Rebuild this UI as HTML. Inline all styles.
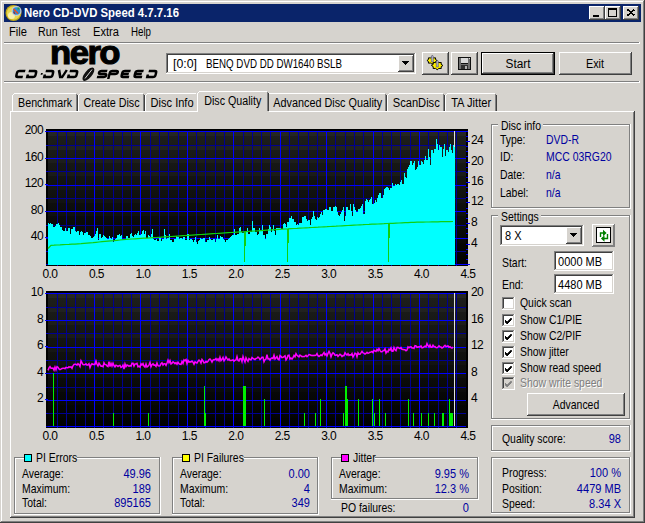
<!DOCTYPE html>
<html><head><meta charset="utf-8"><style>
html,body{margin:0;padding:0;width:645px;height:523px;overflow:hidden;background:#D6D3CE}
svg{display:block}
text{font-family:"Liberation Sans", sans-serif}
</style></head><body>
<svg width="645" height="523" viewBox="0 0 645 523" shape-rendering="crispEdges">
<rect x="0" y="0" width="645" height="523" fill="#D6D3CE"/>
<rect x="0" y="0" width="645" height="1" fill="#D6D3CE"/>
<rect x="0" y="0" width="1" height="523" fill="#D6D3CE"/>
<rect x="1" y="1" width="643" height="1" fill="#FFFFFF"/>
<rect x="1" y="1" width="1" height="521" fill="#FFFFFF"/>
<rect x="1" y="521" width="643" height="1" fill="#808080"/>
<rect x="643" y="1" width="1" height="521" fill="#808080"/>
<rect x="0" y="522" width="645" height="1" fill="#404040"/>
<rect x="644" y="0" width="1" height="523" fill="#404040"/>
<rect x="4" y="4" width="637" height="18" fill="#0A246A"/>
<g shape-rendering="auto"><circle cx="13.5" cy="13" r="8" fill="#C0A818"/><circle cx="13.5" cy="13" r="6.8" fill="#E8D850"/><circle cx="11.5" cy="15.5" r="3.5" fill="#F6F0B0"/><circle cx="16.5" cy="11" r="5" fill="#C8CCD4"/><circle cx="16.5" cy="11" r="3.8" fill="#2890D8"/><path d="M14 8.5 L18.5 13 L17.5 14 L13 9.5 Z" fill="#F04818"/><path d="M14 11 L15.5 14.5 L13.5 13 Z" fill="#C01010"/><rect x="17.5" y="7.5" width="2" height="2" fill="#30A040"/></g>
<text x="24" y="17" font-size="12" fill="#FFFFFF" textLength="155" lengthAdjust="spacingAndGlyphs" font-weight="bold">Nero CD-DVD Speed 4.7.7.16</text>
<rect x="589" y="6" width="16" height="14" fill="#D6D3CE"/>
<rect x="589" y="6" width="16" height="1" fill="#FFFFFF"/>
<rect x="589" y="6" width="1" height="14" fill="#FFFFFF"/>
<rect x="589" y="19" width="16" height="1" fill="#404040"/>
<rect x="604" y="6" width="1" height="14" fill="#404040"/>
<rect x="590" y="18" width="14" height="1" fill="#808080"/>
<rect x="603" y="7" width="1" height="12" fill="#808080"/>
<rect x="605" y="6" width="16" height="14" fill="#D6D3CE"/>
<rect x="605" y="6" width="16" height="1" fill="#FFFFFF"/>
<rect x="605" y="6" width="1" height="14" fill="#FFFFFF"/>
<rect x="605" y="19" width="16" height="1" fill="#404040"/>
<rect x="620" y="6" width="1" height="14" fill="#404040"/>
<rect x="606" y="18" width="14" height="1" fill="#808080"/>
<rect x="619" y="7" width="1" height="12" fill="#808080"/>
<rect x="623" y="6" width="16" height="14" fill="#D6D3CE"/>
<rect x="623" y="6" width="16" height="1" fill="#FFFFFF"/>
<rect x="623" y="6" width="1" height="14" fill="#FFFFFF"/>
<rect x="623" y="19" width="16" height="1" fill="#404040"/>
<rect x="638" y="6" width="1" height="14" fill="#404040"/>
<rect x="624" y="18" width="14" height="1" fill="#808080"/>
<rect x="637" y="7" width="1" height="12" fill="#808080"/>
<rect x="593" y="15" width="6" height="2" fill="#000"/>
<rect x="608" y="8" width="9" height="1" fill="#000"/>
<rect x="608" y="8" width="1" height="9" fill="#000"/>
<rect x="608" y="16" width="9" height="1" fill="#000"/>
<rect x="616" y="8" width="1" height="9" fill="#000"/>
<rect x="608" y="9" width="9" height="1" fill="#000"/>
<path d="M627.5 9.5 L634.5 15.5 M634.5 9.5 L627.5 15.5" stroke="#000" stroke-width="1.6"/>
<text x="9" y="36" font-size="12" fill="#000" textLength="18" lengthAdjust="spacingAndGlyphs">File</text>
<text x="38" y="36" font-size="12" fill="#000" textLength="42" lengthAdjust="spacingAndGlyphs">Run Test</text>
<text x="93" y="36" font-size="12" fill="#000" textLength="26" lengthAdjust="spacingAndGlyphs">Extra</text>
<text x="131" y="36" font-size="12" fill="#000" textLength="20" lengthAdjust="spacingAndGlyphs">Help</text>
<rect x="4" y="42" width="635" height="1" fill="#808080"/>
<rect x="4" y="43" width="636" height="1" fill="#FFFFFF"/>
<rect x="639" y="42" width="1" height="1" fill="#FFFFFF"/>
<rect x="4" y="81" width="635" height="1" fill="#808080"/>
<rect x="4" y="82" width="636" height="1" fill="#FFFFFF"/>
<rect x="639" y="81" width="1" height="1" fill="#FFFFFF"/>
<text x="50" y="64" font-size="33" fill="#000" letter-spacing="-1.5" textLength="69" lengthAdjust="spacingAndGlyphs" font-weight="bold" font-weight="900" stroke="#000" stroke-width="1.1">nero</text>
<g transform="translate(0 78) skewX(-14) translate(0 -78)" shape-rendering="auto"><path d="M23.5 71 H17.7 Q15.7 71 15.7 73 V75 Q15.7 77 17.7 77 H22.5M27 71 H32.8 Q34.8 71 34.8 73 V75 Q34.8 77 32.8 77 H27 V74.5M44 71 H49.8 Q51.8 71 51.8 73 V75 Q51.8 77 49.8 77 H44 V74.5M57 70 L60 77 H62 L64.8 70M68 71 H73.8 Q75.8 71 75.8 73 V75 Q75.8 77 73.8 77 H68 V74.5M105.5 71 H99.7 Q97.7 71 97.7 72.5 Q97.7 74 99.7 74 H103.5 Q105.5 74 105.5 75.5 Q105.5 77 103.5 77 H96.7M108.5 79 V73 Q108.5 71 110.5 71 H114.3 Q116.3 71 116.3 72.5 Q116.3 74 114.3 74 H109.5M128.8 71 H123 Q121 71 121 73 V75 Q121 77 123 77 H128.8 M122 74 H127.80000000000001M141.8 71 H136 Q134 71 134 73 V75 Q134 77 136 77 H141.8 M135 74 H140.8M147 71 H152.8 Q154.8 71 154.8 73 V75 Q154.8 77 152.8 77 H147 V74.5" stroke="#000" stroke-width="2.5" fill="none"/><rect x="39.8" y="73" width="1.8" height="1.8" fill="#000"/></g>
<g shape-rendering="auto"><ellipse cx="88.4" cy="74.2" rx="3.6" ry="8.2" transform="rotate(40 88.4 74.2)" fill="#111"/><path d="M85 78.5 L92 69.5" stroke="#D8D8D8" stroke-width="1" fill="none"/></g>
<rect x="166" y="53" width="250" height="21" fill="#FFFFFF"/>
<rect x="166" y="53" width="250" height="1" fill="#808080"/>
<rect x="166" y="53" width="1" height="21" fill="#808080"/>
<rect x="166" y="73" width="250" height="1" fill="#FFFFFF"/>
<rect x="415" y="53" width="1" height="21" fill="#FFFFFF"/>
<rect x="167" y="54" width="248" height="1" fill="#404040"/>
<rect x="167" y="54" width="1" height="19" fill="#404040"/>
<rect x="167" y="72" width="248" height="1" fill="#D6D3CE"/>
<rect x="414" y="54" width="1" height="19" fill="#D6D3CE"/>
<text x="173" y="68" font-size="12" fill="#000" textLength="24" lengthAdjust="spacingAndGlyphs">[0:0]</text>
<text x="206" y="68" font-size="12" fill="#000" textLength="136" lengthAdjust="spacingAndGlyphs">BENQ DVD DD DW1640 BSLB</text>
<rect x="398" y="55" width="16" height="17" fill="#D6D3CE"/>
<rect x="398" y="55" width="16" height="1" fill="#FFFFFF"/>
<rect x="398" y="55" width="1" height="17" fill="#FFFFFF"/>
<rect x="398" y="71" width="16" height="1" fill="#404040"/>
<rect x="413" y="55" width="1" height="17" fill="#404040"/>
<rect x="399" y="70" width="14" height="1" fill="#808080"/>
<rect x="412" y="56" width="1" height="15" fill="#808080"/>
<path d="M402 61 h7 l-3.5 4 z" fill="#000"/>
<rect x="422" y="52" width="27" height="23" fill="#D6D3CE"/>
<rect x="422" y="52" width="27" height="1" fill="#FFFFFF"/>
<rect x="422" y="52" width="1" height="23" fill="#FFFFFF"/>
<rect x="422" y="74" width="27" height="1" fill="#404040"/>
<rect x="448" y="52" width="1" height="23" fill="#404040"/>
<rect x="423" y="73" width="25" height="1" fill="#808080"/>
<rect x="447" y="53" width="1" height="21" fill="#808080"/>
<rect x="451" y="52" width="27" height="23" fill="#D6D3CE"/>
<rect x="451" y="52" width="27" height="1" fill="#FFFFFF"/>
<rect x="451" y="52" width="1" height="23" fill="#FFFFFF"/>
<rect x="451" y="74" width="27" height="1" fill="#404040"/>
<rect x="477" y="52" width="1" height="23" fill="#404040"/>
<rect x="452" y="73" width="25" height="1" fill="#808080"/>
<rect x="476" y="53" width="1" height="21" fill="#808080"/>
<g shape-rendering="auto"><polygon points="437.06,60.50 435.51,61.57 435.58,63.14 433.45,63.09 432.00,64.24 430.55,63.09 428.42,63.14 428.49,61.57 426.94,60.50 428.49,59.43 428.42,57.86 430.55,57.91 432.00,56.76 433.45,57.91 435.58,57.86 435.51,59.43" fill="#FFF000" stroke="#000" stroke-width="1"/><polygon points="442.95,65.50 441.13,66.70 441.27,68.51 438.83,68.41 437.20,69.75 435.57,68.41 433.13,68.51 433.27,66.70 431.45,65.50 433.27,64.30 433.13,62.49 435.57,62.59 437.20,61.25 438.83,62.59 441.27,62.49 441.13,64.30" fill="#FFF000" stroke="#000" stroke-width="1"/><path d="M431.3 62 V56.5 L432.3 55 L433.3 56.5 V62 Z" fill="#B0B0D0" stroke="#404050" stroke-width="0.5"/><path d="M436.3 67 V61.5 L437.3 60 L438.3 61.5 V67 Z" fill="#B0B0D0" stroke="#404050" stroke-width="0.5"/></g>
<g><rect x="458" y="57" width="13" height="13" fill="#101010"/><rect x="459" y="58" width="11" height="11" fill="#707070"/><rect x="461" y="58" width="7" height="6" fill="#101010"/><rect x="461" y="58" width="7" height="5" fill="#D8D8D8"/><rect x="461" y="65" width="7" height="4" fill="#303030"/><rect x="465" y="66" width="2" height="3" fill="#B0B0B0"/><rect x="469" y="58" width="1" height="1" fill="#E0E0E0"/></g>
<rect x="481" y="52" width="74" height="23" fill="#000"/>
<rect x="482" y="53" width="72" height="21" fill="#D6D3CE"/>
<rect x="482" y="53" width="72" height="1" fill="#FFFFFF"/>
<rect x="482" y="53" width="1" height="21" fill="#FFFFFF"/>
<rect x="482" y="73" width="72" height="1" fill="#404040"/>
<rect x="553" y="53" width="1" height="21" fill="#404040"/>
<rect x="483" y="72" width="70" height="1" fill="#808080"/>
<rect x="552" y="54" width="1" height="19" fill="#808080"/>
<text x="518" y="68" font-size="12" fill="#000" text-anchor="middle" textLength="25" lengthAdjust="spacingAndGlyphs">Start</text>
<rect x="559" y="52" width="73" height="23" fill="#D6D3CE"/>
<rect x="559" y="52" width="73" height="1" fill="#FFFFFF"/>
<rect x="559" y="52" width="1" height="23" fill="#FFFFFF"/>
<rect x="559" y="74" width="73" height="1" fill="#404040"/>
<rect x="631" y="52" width="1" height="23" fill="#404040"/>
<rect x="560" y="73" width="71" height="1" fill="#808080"/>
<rect x="630" y="53" width="1" height="21" fill="#808080"/>
<text x="595" y="68" font-size="12" fill="#000" text-anchor="middle" textLength="18" lengthAdjust="spacingAndGlyphs">Exit</text>
<rect x="10" y="111" width="625" height="407" fill="#D6D3CE"/>
<rect x="10" y="111" width="624" height="1" fill="#FFFFFF"/>
<rect x="10" y="111" width="1" height="407" fill="#FFFFFF"/>
<rect x="11" y="516" width="623" height="1" fill="#808080"/>
<rect x="633" y="112" width="1" height="405" fill="#808080"/>
<rect x="10" y="517" width="625" height="1" fill="#404040"/>
<rect x="634" y="111" width="1" height="407" fill="#404040"/>
<rect x="14" y="93" width="62" height="1" fill="#FFFFFF"/>
<rect x="12" y="95" width="1" height="16" fill="#FFFFFF"/>
<rect x="13" y="94" width="1" height="1" fill="#FFFFFF"/>
<rect x="77" y="95" width="1" height="16" fill="#404040"/>
<rect x="76" y="94" width="1" height="17" fill="#808080"/>
<text x="45.1" y="107" font-size="12" fill="#000" text-anchor="middle" textLength="54" lengthAdjust="spacingAndGlyphs">Benchmark</text>
<rect x="80" y="93" width="63" height="1" fill="#FFFFFF"/>
<rect x="78" y="95" width="1" height="16" fill="#FFFFFF"/>
<rect x="79" y="94" width="1" height="1" fill="#FFFFFF"/>
<rect x="144" y="95" width="1" height="16" fill="#404040"/>
<rect x="143" y="94" width="1" height="17" fill="#808080"/>
<text x="111.5" y="107" font-size="12" fill="#000" text-anchor="middle" textLength="56" lengthAdjust="spacingAndGlyphs">Create Disc</text>
<rect x="147" y="93" width="49" height="1" fill="#FFFFFF"/>
<rect x="145" y="95" width="1" height="16" fill="#FFFFFF"/>
<rect x="146" y="94" width="1" height="1" fill="#FFFFFF"/>
<text x="172.1" y="107" font-size="12" fill="#000" text-anchor="middle" textLength="43" lengthAdjust="spacingAndGlyphs">Disc Info</text>
<rect x="197" y="91" width="72" height="22" fill="#D6D3CE"/>
<rect x="199" y="91" width="68" height="1" fill="#FFFFFF"/>
<rect x="197" y="93" width="1" height="19" fill="#FFFFFF"/>
<rect x="198" y="92" width="1" height="1" fill="#FFFFFF"/>
<rect x="268" y="93" width="1" height="18" fill="#404040"/>
<rect x="267" y="92" width="1" height="19" fill="#808080"/>
<text x="232.75" y="105" font-size="12" fill="#000" text-anchor="middle" textLength="57" lengthAdjust="spacingAndGlyphs">Disc Quality</text>
<rect x="269" y="93" width="116" height="1" fill="#FFFFFF"/>
<rect x="386" y="95" width="1" height="16" fill="#404040"/>
<rect x="385" y="94" width="1" height="17" fill="#808080"/>
<text x="327.75" y="107" font-size="12" fill="#000" text-anchor="middle" textLength="109" lengthAdjust="spacingAndGlyphs">Advanced Disc Quality</text>
<rect x="389" y="93" width="54" height="1" fill="#FFFFFF"/>
<rect x="387" y="95" width="1" height="16" fill="#FFFFFF"/>
<rect x="388" y="94" width="1" height="1" fill="#FFFFFF"/>
<rect x="444" y="95" width="1" height="16" fill="#404040"/>
<rect x="443" y="94" width="1" height="17" fill="#808080"/>
<text x="416.25" y="107" font-size="12" fill="#000" text-anchor="middle" textLength="47" lengthAdjust="spacingAndGlyphs">ScanDisc</text>
<rect x="447" y="93" width="48" height="1" fill="#FFFFFF"/>
<rect x="445" y="95" width="1" height="16" fill="#FFFFFF"/>
<rect x="446" y="94" width="1" height="1" fill="#FFFFFF"/>
<rect x="496" y="95" width="1" height="16" fill="#404040"/>
<rect x="495" y="94" width="1" height="17" fill="#808080"/>
<text x="471.15" y="107" font-size="12" fill="#000" text-anchor="middle" textLength="40" lengthAdjust="spacingAndGlyphs">TA Jitter</text>
<defs>
<linearGradient id="g1" x1="0" y1="0" x2="0" y2="1"><stop offset="0" stop-color="#1e1f1c"/><stop offset="1" stop-color="#000"/></linearGradient>
<linearGradient id="g2" x1="0" y1="0" x2="0" y2="1"><stop offset="0" stop-color="#1e1f1c"/><stop offset="1" stop-color="#000"/></linearGradient>
</defs>
<rect x="46" y="129" width="422" height="137" fill="#000"/>
<rect x="48" y="131" width="418" height="134" fill="url(#g1)"/>
<rect x="48" y="132" width="418" height="4" fill="#FFFFFF" fill-opacity="0.035"/>
<rect x="48" y="146" width="418" height="4" fill="#FFFFFF" fill-opacity="0.032"/>
<rect x="48" y="159" width="418" height="4" fill="#FFFFFF" fill-opacity="0.029"/>
<rect x="48" y="172" width="418" height="4" fill="#FFFFFF" fill-opacity="0.026"/>
<rect x="48" y="186" width="418" height="4" fill="#FFFFFF" fill-opacity="0.023"/>
<rect x="48" y="199" width="418" height="4" fill="#FFFFFF" fill-opacity="0.020"/>
<rect x="48" y="212" width="418" height="4" fill="#FFFFFF" fill-opacity="0.018"/>
<rect x="48" y="226" width="418" height="4" fill="#FFFFFF" fill-opacity="0.015"/>
<rect x="48" y="239" width="418" height="4" fill="#FFFFFF" fill-opacity="0.012"/>
<rect x="48" y="252" width="418" height="4" fill="#FFFFFF" fill-opacity="0.009"/>
<rect x="48" y="145" width="418" height="1" fill="#000090"/>
<rect x="48" y="171" width="418" height="1" fill="#000090"/>
<rect x="48" y="198" width="418" height="1" fill="#000090"/>
<rect x="48" y="225" width="418" height="1" fill="#000090"/>
<rect x="48" y="251" width="418" height="1" fill="#000090"/>
<rect x="57" y="131" width="1" height="134" fill="#000090"/>
<rect x="66" y="131" width="1" height="134" fill="#000090"/>
<rect x="75" y="131" width="1" height="134" fill="#000090"/>
<rect x="85" y="131" width="1" height="134" fill="#000090"/>
<rect x="103" y="131" width="1" height="134" fill="#000090"/>
<rect x="113" y="131" width="1" height="134" fill="#000090"/>
<rect x="122" y="131" width="1" height="134" fill="#000090"/>
<rect x="131" y="131" width="1" height="134" fill="#000090"/>
<rect x="150" y="131" width="1" height="134" fill="#000090"/>
<rect x="159" y="131" width="1" height="134" fill="#000090"/>
<rect x="168" y="131" width="1" height="134" fill="#000090"/>
<rect x="178" y="131" width="1" height="134" fill="#000090"/>
<rect x="196" y="131" width="1" height="134" fill="#000090"/>
<rect x="205" y="131" width="1" height="134" fill="#000090"/>
<rect x="215" y="131" width="1" height="134" fill="#000090"/>
<rect x="224" y="131" width="1" height="134" fill="#000090"/>
<rect x="243" y="131" width="1" height="134" fill="#000090"/>
<rect x="252" y="131" width="1" height="134" fill="#000090"/>
<rect x="261" y="131" width="1" height="134" fill="#000090"/>
<rect x="270" y="131" width="1" height="134" fill="#000090"/>
<rect x="289" y="131" width="1" height="134" fill="#000090"/>
<rect x="298" y="131" width="1" height="134" fill="#000090"/>
<rect x="308" y="131" width="1" height="134" fill="#000090"/>
<rect x="317" y="131" width="1" height="134" fill="#000090"/>
<rect x="335" y="131" width="1" height="134" fill="#000090"/>
<rect x="345" y="131" width="1" height="134" fill="#000090"/>
<rect x="354" y="131" width="1" height="134" fill="#000090"/>
<rect x="363" y="131" width="1" height="134" fill="#000090"/>
<rect x="382" y="131" width="1" height="134" fill="#000090"/>
<rect x="391" y="131" width="1" height="134" fill="#000090"/>
<rect x="400" y="131" width="1" height="134" fill="#000090"/>
<rect x="410" y="131" width="1" height="134" fill="#000090"/>
<rect x="428" y="131" width="1" height="134" fill="#000090"/>
<rect x="438" y="131" width="1" height="134" fill="#000090"/>
<rect x="447" y="131" width="1" height="134" fill="#000090"/>
<rect x="456" y="131" width="1" height="134" fill="#000090"/>
<rect x="48" y="131" width="418" height="1" fill="#0000FF"/>
<rect x="48" y="158" width="418" height="1" fill="#0000FF"/>
<rect x="48" y="185" width="418" height="1" fill="#0000FF"/>
<rect x="48" y="211" width="418" height="1" fill="#0000FF"/>
<rect x="48" y="238" width="418" height="1" fill="#0000FF"/>
<rect x="48" y="264" width="418" height="1" fill="#0000FF"/>
<rect x="94" y="131" width="1" height="134" fill="#0000FF"/>
<rect x="140" y="131" width="1" height="134" fill="#0000FF"/>
<rect x="187" y="131" width="1" height="134" fill="#0000FF"/>
<rect x="233" y="131" width="1" height="134" fill="#0000FF"/>
<rect x="280" y="131" width="1" height="134" fill="#0000FF"/>
<rect x="326" y="131" width="1" height="134" fill="#0000FF"/>
<rect x="373" y="131" width="1" height="134" fill="#0000FF"/>
<rect x="419" y="131" width="1" height="134" fill="#0000FF"/>
<rect x="57" y="265" width="1" height="1" fill="#0000C0"/>
<rect x="66" y="265" width="1" height="1" fill="#0000C0"/>
<rect x="75" y="265" width="1" height="1" fill="#0000C0"/>
<rect x="85" y="265" width="1" height="1" fill="#0000C0"/>
<rect x="94" y="265" width="1" height="1" fill="#0000C0"/>
<rect x="103" y="265" width="1" height="1" fill="#0000C0"/>
<rect x="113" y="265" width="1" height="1" fill="#0000C0"/>
<rect x="122" y="265" width="1" height="1" fill="#0000C0"/>
<rect x="131" y="265" width="1" height="1" fill="#0000C0"/>
<rect x="140" y="265" width="1" height="1" fill="#0000C0"/>
<rect x="150" y="265" width="1" height="1" fill="#0000C0"/>
<rect x="159" y="265" width="1" height="1" fill="#0000C0"/>
<rect x="168" y="265" width="1" height="1" fill="#0000C0"/>
<rect x="178" y="265" width="1" height="1" fill="#0000C0"/>
<rect x="187" y="265" width="1" height="1" fill="#0000C0"/>
<rect x="196" y="265" width="1" height="1" fill="#0000C0"/>
<rect x="205" y="265" width="1" height="1" fill="#0000C0"/>
<rect x="215" y="265" width="1" height="1" fill="#0000C0"/>
<rect x="224" y="265" width="1" height="1" fill="#0000C0"/>
<rect x="233" y="265" width="1" height="1" fill="#0000C0"/>
<rect x="243" y="265" width="1" height="1" fill="#0000C0"/>
<rect x="252" y="265" width="1" height="1" fill="#0000C0"/>
<rect x="261" y="265" width="1" height="1" fill="#0000C0"/>
<rect x="270" y="265" width="1" height="1" fill="#0000C0"/>
<rect x="280" y="265" width="1" height="1" fill="#0000C0"/>
<rect x="289" y="265" width="1" height="1" fill="#0000C0"/>
<rect x="298" y="265" width="1" height="1" fill="#0000C0"/>
<rect x="308" y="265" width="1" height="1" fill="#0000C0"/>
<rect x="317" y="265" width="1" height="1" fill="#0000C0"/>
<rect x="326" y="265" width="1" height="1" fill="#0000C0"/>
<rect x="335" y="265" width="1" height="1" fill="#0000C0"/>
<rect x="345" y="265" width="1" height="1" fill="#0000C0"/>
<rect x="354" y="265" width="1" height="1" fill="#0000C0"/>
<rect x="363" y="265" width="1" height="1" fill="#0000C0"/>
<rect x="373" y="265" width="1" height="1" fill="#0000C0"/>
<rect x="382" y="265" width="1" height="1" fill="#0000C0"/>
<rect x="391" y="265" width="1" height="1" fill="#0000C0"/>
<rect x="400" y="265" width="1" height="1" fill="#0000C0"/>
<rect x="410" y="265" width="1" height="1" fill="#0000C0"/>
<rect x="419" y="265" width="1" height="1" fill="#0000C0"/>
<rect x="428" y="265" width="1" height="1" fill="#0000C0"/>
<rect x="438" y="265" width="1" height="1" fill="#0000C0"/>
<rect x="447" y="265" width="1" height="1" fill="#0000C0"/>
<rect x="456" y="265" width="1" height="1" fill="#0000C0"/>
<rect x="46" y="131" width="2" height="1" fill="#0000C0"/>
<rect x="46" y="145" width="2" height="1" fill="#0000C0"/>
<rect x="46" y="158" width="2" height="1" fill="#0000C0"/>
<rect x="46" y="171" width="2" height="1" fill="#0000C0"/>
<rect x="46" y="185" width="2" height="1" fill="#0000C0"/>
<rect x="46" y="198" width="2" height="1" fill="#0000C0"/>
<rect x="46" y="211" width="2" height="1" fill="#0000C0"/>
<rect x="46" y="225" width="2" height="1" fill="#0000C0"/>
<rect x="46" y="238" width="2" height="1" fill="#0000C0"/>
<rect x="46" y="251" width="2" height="1" fill="#0000C0"/>
<rect x="46" y="264" width="2" height="1" fill="#0000C0"/>
<path d="M48 264.5 L48 223 L49 223 L49 224 L50 224 L50 223 L51 223 L51 224 L52 224 L52 224 L53 224 L53 227 L54 227 L54 227 L55 227 L55 226 L56 226 L56 224 L57 224 L57 224 L58 224 L58 223 L59 223 L59 225 L60 225 L60 227 L61 227 L61 227 L62 227 L62 230 L63 230 L63 231 L64 231 L64 231 L65 231 L65 228 L66 228 L66 231 L67 231 L67 231 L68 231 L68 228 L69 228 L69 228 L70 228 L70 234 L71 234 L71 229 L72 229 L72 229 L73 229 L73 227 L74 227 L74 227 L75 227 L75 231 L76 231 L76 232 L77 232 L77 231 L78 231 L78 231 L79 231 L79 235 L80 235 L80 232 L81 232 L81 231 L82 231 L82 232 L83 232 L83 235 L84 235 L84 233 L85 233 L85 233 L86 233 L86 232 L87 232 L87 232 L88 232 L88 235 L89 235 L89 235 L90 235 L90 236 L91 236 L91 238 L92 238 L92 238 L93 238 L93 237 L94 237 L94 236 L95 236 L95 234 L96 234 L96 231 L97 231 L97 228 L98 228 L98 240 L99 240 L99 234 L100 234 L100 234 L101 234 L101 238 L102 238 L102 237 L103 237 L103 235 L104 235 L104 236 L105 236 L105 237 L106 237 L106 238 L107 238 L107 239 L108 239 L108 239 L109 239 L109 236 L110 236 L110 238 L111 238 L111 239 L112 239 L112 237 L113 237 L113 242 L114 242 L114 241 L115 241 L115 239 L116 239 L116 238 L117 238 L117 235 L118 235 L118 235 L119 235 L119 234 L120 234 L120 236 L121 236 L121 235 L122 235 L122 239 L123 239 L123 239 L124 239 L124 239 L125 239 L125 240 L126 240 L126 236 L127 236 L127 236 L128 236 L128 238 L129 238 L129 238 L130 238 L130 234 L131 234 L131 233 L132 233 L132 236 L133 236 L133 237 L134 237 L134 235 L135 235 L135 234 L136 234 L136 235 L137 235 L137 233 L138 233 L138 231 L139 231 L139 235 L140 235 L140 235 L141 235 L141 234 L142 234 L142 231 L143 231 L143 230 L144 230 L144 234 L145 234 L145 231 L146 231 L146 238 L147 238 L147 238 L148 238 L148 235 L149 235 L149 236 L150 236 L150 237 L151 237 L151 234 L152 234 L152 229 L153 229 L153 239 L154 239 L154 240 L155 240 L155 240 L156 240 L156 239 L157 239 L157 241 L158 241 L158 241 L159 241 L159 238 L160 238 L160 238 L161 238 L161 241 L162 241 L162 239 L163 239 L163 239 L164 239 L164 229 L165 229 L165 235 L166 235 L166 239 L167 239 L167 238 L168 238 L168 238 L169 238 L169 234 L170 234 L170 240 L171 240 L171 240 L172 240 L172 242 L173 242 L173 242 L174 242 L174 239 L175 239 L175 239 L176 239 L176 236 L177 236 L177 237 L178 237 L178 237 L179 237 L179 239 L180 239 L180 238 L181 238 L181 238 L182 238 L182 239 L183 239 L183 237 L184 237 L184 237 L185 237 L185 240 L186 240 L186 240 L187 240 L187 234 L188 234 L188 234 L189 234 L189 240 L190 240 L190 239 L191 239 L191 239 L192 239 L192 240 L193 240 L193 242 L194 242 L194 240 L195 240 L195 237 L196 237 L196 242 L197 242 L197 244 L198 244 L198 241 L199 241 L199 240 L200 240 L200 238 L201 238 L201 239 L202 239 L202 239 L203 239 L203 238 L204 238 L204 238 L205 238 L205 242 L206 242 L206 242 L207 242 L207 240 L208 240 L208 240 L209 240 L209 237 L210 237 L210 239 L211 239 L211 240 L212 240 L212 240 L213 240 L213 239 L214 239 L214 239 L215 239 L215 242 L216 242 L216 239 L217 239 L217 235 L218 235 L218 239 L219 239 L219 239 L220 239 L220 236 L221 236 L221 237 L222 237 L222 237 L223 237 L223 239 L224 239 L224 240 L225 240 L225 242 L226 242 L226 240 L227 240 L227 240 L228 240 L228 239 L229 239 L229 238 L230 238 L230 237 L231 237 L231 236 L232 236 L232 235 L233 235 L233 235 L234 235 L234 229 L235 229 L235 235 L236 235 L236 235 L237 235 L237 234 L238 234 L238 234 L239 234 L239 228 L240 228 L240 227 L241 227 L241 232 L242 232 L242 233 L243 233 L243 233 L244 233 L244 233 L245 233 L245 232 L246 232 L246 231 L247 231 L247 228 L248 228 L248 234 L249 234 L249 234 L250 234 L250 232 L251 232 L251 232 L252 232 L252 221 L253 221 L253 228 L254 228 L254 228 L255 228 L255 232 L256 232 L256 232 L257 232 L257 235 L258 235 L258 234 L259 234 L259 228 L260 228 L260 230 L261 230 L261 231 L262 231 L262 225 L263 225 L263 235 L264 235 L264 235 L265 235 L265 239 L266 239 L266 234 L267 234 L267 234 L268 234 L268 229 L269 229 L269 225 L270 225 L270 227 L271 227 L271 232 L272 232 L272 229 L273 229 L273 225 L274 225 L274 231 L275 231 L275 235 L276 235 L276 228 L277 228 L277 228 L278 228 L278 228 L279 228 L279 228 L280 228 L280 228 L281 228 L281 229 L282 229 L282 229 L283 229 L283 224 L284 224 L284 223 L285 223 L285 224 L286 224 L286 227 L287 227 L287 222 L288 222 L288 222 L289 222 L289 218 L290 218 L290 218 L291 218 L291 216 L292 216 L292 219 L293 219 L293 219 L294 219 L294 222 L295 222 L295 222 L296 222 L296 225 L297 225 L297 224 L298 224 L298 225 L299 225 L299 223 L300 223 L300 223 L301 223 L301 223 L302 223 L302 217 L303 217 L303 217 L304 217 L304 216 L305 216 L305 216 L306 216 L306 219 L307 219 L307 221 L308 221 L308 220 L309 220 L309 220 L310 220 L310 225 L311 225 L311 219 L312 219 L312 217 L313 217 L313 211 L314 211 L314 216 L315 216 L315 219 L316 219 L316 220 L317 220 L317 217 L318 217 L318 218 L319 218 L319 217 L320 217 L320 214 L321 214 L321 212 L322 212 L322 215 L323 215 L323 210 L324 210 L324 210 L325 210 L325 209 L326 209 L326 209 L327 209 L327 210 L328 210 L328 210 L329 210 L329 207 L330 207 L330 207 L331 207 L331 211 L332 211 L332 211 L333 211 L333 207 L334 207 L334 207 L335 207 L335 206 L336 206 L336 207 L337 207 L337 212 L338 212 L338 215 L339 215 L339 216 L340 216 L340 214 L341 214 L341 212 L342 212 L342 210 L343 210 L343 207 L344 207 L344 221 L345 221 L345 216 L346 216 L346 207 L347 207 L347 207 L348 207 L348 210 L349 210 L349 210 L350 210 L350 204 L351 204 L351 211 L352 211 L352 216 L353 216 L353 204 L354 204 L354 207 L355 207 L355 210 L356 210 L356 212 L357 212 L357 212 L358 212 L358 209 L359 209 L359 209 L360 209 L360 208 L361 208 L361 206 L362 206 L362 204 L363 204 L363 214 L364 214 L364 214 L365 214 L365 201 L366 201 L366 199 L367 199 L367 200 L368 200 L368 202 L369 202 L369 200 L370 200 L370 199 L371 199 L371 197 L372 197 L372 204 L373 204 L373 204 L374 204 L374 203 L375 203 L375 200 L376 200 L376 202 L377 202 L377 198 L378 198 L378 195 L379 195 L379 193 L380 193 L380 193 L381 193 L381 198 L382 198 L382 198 L383 198 L383 195 L384 195 L384 189 L385 189 L385 188 L386 188 L386 187 L387 187 L387 187 L388 187 L388 188 L389 188 L389 190 L390 190 L390 188 L391 188 L391 188 L392 188 L392 183 L393 183 L393 186 L394 186 L394 186 L395 186 L395 184 L396 184 L396 185 L397 185 L397 184 L398 184 L398 184 L399 184 L399 185 L400 185 L400 182 L401 182 L401 180 L402 180 L402 184 L403 184 L403 184 L404 184 L404 173 L405 173 L405 177 L406 177 L406 178 L407 178 L407 169 L408 169 L408 167 L409 167 L409 165 L410 165 L410 161 L411 161 L411 161 L412 161 L412 165 L413 165 L413 163 L414 163 L414 161 L415 161 L415 170 L416 170 L416 169 L417 169 L417 167 L418 167 L418 161 L419 161 L419 165 L420 165 L420 165 L421 165 L421 161 L422 161 L422 162 L423 162 L423 164 L424 164 L424 160 L425 160 L425 156 L426 156 L426 160 L427 160 L427 160 L428 160 L428 149 L429 149 L429 157 L430 157 L430 165 L431 165 L431 150 L432 150 L432 150 L433 150 L433 153 L434 153 L434 149 L435 149 L435 149 L436 149 L436 139 L437 139 L437 144 L438 144 L438 150 L439 150 L439 145 L440 145 L440 147 L441 147 L441 147 L442 147 L442 157 L443 157 L443 149 L444 149 L444 144 L445 144 L445 156 L446 156 L446 150 L447 150 L447 150 L448 150 L448 152 L449 152 L449 147 L450 147 L450 144 L451 144 L451 150 L452 150 L452 153 L453 153 L453 145 L454 145 L454 146 L455 146 L455 264.5 Z" fill="#00FFFF" shape-rendering="crispEdges"/>
<rect x="454" y="131" width="1" height="16" fill="#E0E0E0"/>
<path d="M48 248.5 L51 245.3 L54 245.2 L57 245.0 L60 244.9 L63 244.7 L66 244.5 L69 244.4 L72 244.2 L75 244.1 L78 243.9 L81 243.7 L84 243.4 L87 243.1 L90 242.8 L93 242.6 L96 242.3 L99 242.0 L102 241.7 L105 241.4 L108 241.1 L111 240.8 L114 240.6 L117 240.3 L120 240.0 L123 239.7 L126 239.4 L129 239.2 L132 239.0 L135 238.8 L138 238.6 L141 238.4 L144 238.2 L147 238.1 L150 237.9 L153 237.7 L156 237.5 L159 237.3 L162 237.1 L165 236.9 L168 236.7 L171 236.5 L174 236.3 L177 236.1 L180 235.9 L183 235.7 L186 235.5 L189 235.3 L192 235.1 L195 234.9 L198 234.7 L201 234.5 L204 234.3 L207 234.1 L210 233.9 L213 233.7 L216 233.5 L219 233.3 L222 233.1 L225 232.9 L228 232.7 L231 232.5 L234 232.3 L237 232.1 L240 231.9 L243 231.8 L246 231.6 L249 231.4 L252 231.2 L255 231.0 L258 230.8 L261 230.6 L264 230.4 L267 230.2 L270 230.0 L273 229.8 L276 229.6 L279 229.4 L282 229.2 L285 229.0 L288 228.9 L291 228.7 L294 228.5 L297 228.4 L300 228.2 L303 228.0 L306 227.8 L309 227.7 L312 227.5 L315 227.3 L318 227.2 L321 227.0 L324 226.8 L327 226.7 L330 226.5 L333 226.3 L336 226.2 L339 226.0 L342 225.8 L345 225.6 L348 225.5 L351 225.3 L354 225.1 L357 225.0 L360 224.8 L363 224.7 L366 224.5 L369 224.4 L372 224.2 L375 224.1 L378 224.0 L381 223.8 L384 223.7 L387 223.5 L390 223.4 L393 223.3 L396 223.1 L399 223.0 L402 222.8 L405 222.7 L408 222.6 L411 222.4 L414 222.3 L417 222.2 L420 222.1 L423 222.1 L426 222.0 L429 222.0 L432 221.9 L435 221.8 L438 221.8 L441 221.7 L444 221.7 L447 221.6 L450 221.6 L453 221.5" stroke="#10D010" stroke-width="1.2" fill="none" shape-rendering="auto"/>
<rect x="244" y="232" width="1" height="30" fill="#10D010"/>
<rect x="245" y="232" width="1" height="14" fill="#10D010"/>
<rect x="287" y="229" width="1" height="33" fill="#10D010"/>
<rect x="288" y="229" width="1" height="14" fill="#10D010"/>
<rect x="388" y="224" width="1" height="38" fill="#10D010"/>
<rect x="389" y="224" width="1" height="14" fill="#10D010"/>
<rect x="45" y="131" width="3" height="1" fill="#0000FF"/>
<text x="43" y="134" font-size="12" fill="#000" text-anchor="end" letter-spacing="-0.6">200</text>
<rect x="45" y="158" width="3" height="1" fill="#0000FF"/>
<text x="43" y="161" font-size="12" fill="#000" text-anchor="end" letter-spacing="-0.6">160</text>
<rect x="45" y="184" width="3" height="1" fill="#0000FF"/>
<text x="43" y="187" font-size="12" fill="#000" text-anchor="end" letter-spacing="-0.6">120</text>
<rect x="45" y="211" width="3" height="1" fill="#0000FF"/>
<text x="43" y="214" font-size="12" fill="#000" text-anchor="end" letter-spacing="-0.6">80</text>
<rect x="45" y="237" width="3" height="1" fill="#0000FF"/>
<text x="43" y="240" font-size="12" fill="#000" text-anchor="end" letter-spacing="-0.6">40</text>
<text x="50.0" y="278" font-size="12" fill="#000" text-anchor="middle" letter-spacing="-0.6">0.0</text>
<text x="96.4" y="278" font-size="12" fill="#000" text-anchor="middle" letter-spacing="-0.6">0.5</text>
<text x="142.9" y="278" font-size="12" fill="#000" text-anchor="middle" letter-spacing="-0.6">1.0</text>
<text x="189.3" y="278" font-size="12" fill="#000" text-anchor="middle" letter-spacing="-0.6">1.5</text>
<text x="235.8" y="278" font-size="12" fill="#000" text-anchor="middle" letter-spacing="-0.6">2.0</text>
<text x="282.2" y="278" font-size="12" fill="#000" text-anchor="middle" letter-spacing="-0.6">2.5</text>
<text x="328.6" y="278" font-size="12" fill="#000" text-anchor="middle" letter-spacing="-0.6">3.0</text>
<text x="375.1" y="278" font-size="12" fill="#000" text-anchor="middle" letter-spacing="-0.6">3.5</text>
<text x="421.5" y="278" font-size="12" fill="#000" text-anchor="middle" letter-spacing="-0.6">4.0</text>
<text x="468.0" y="278" font-size="12" fill="#000" text-anchor="middle" letter-spacing="-0.6">4.5</text>
<rect x="466" y="264" width="4" height="1" fill="#0000FF"/>
<rect x="466" y="259" width="2" height="1" fill="#0000FF"/>
<rect x="466" y="254" width="2" height="1" fill="#0000FF"/>
<rect x="466" y="249" width="2" height="1" fill="#0000FF"/>
<rect x="466" y="244" width="4" height="1" fill="#0000FF"/>
<text x="471" y="247" font-size="12" fill="#000" letter-spacing="-0.6">4</text>
<rect x="466" y="238" width="2" height="1" fill="#0000FF"/>
<rect x="466" y="233" width="2" height="1" fill="#0000FF"/>
<rect x="466" y="228" width="2" height="1" fill="#0000FF"/>
<rect x="466" y="223" width="4" height="1" fill="#0000FF"/>
<text x="471" y="226" font-size="12" fill="#000" letter-spacing="-0.6">8</text>
<rect x="466" y="218" width="2" height="1" fill="#0000FF"/>
<rect x="466" y="213" width="2" height="1" fill="#0000FF"/>
<rect x="466" y="208" width="2" height="1" fill="#0000FF"/>
<rect x="466" y="202" width="4" height="1" fill="#0000FF"/>
<text x="471" y="205" font-size="12" fill="#000" letter-spacing="-0.6">12</text>
<rect x="466" y="197" width="2" height="1" fill="#0000FF"/>
<rect x="466" y="192" width="2" height="1" fill="#0000FF"/>
<rect x="466" y="187" width="2" height="1" fill="#0000FF"/>
<rect x="466" y="182" width="4" height="1" fill="#0000FF"/>
<text x="471" y="185" font-size="12" fill="#000" letter-spacing="-0.6">16</text>
<rect x="466" y="177" width="2" height="1" fill="#0000FF"/>
<rect x="466" y="172" width="2" height="1" fill="#0000FF"/>
<rect x="466" y="167" width="2" height="1" fill="#0000FF"/>
<rect x="466" y="162" width="4" height="1" fill="#0000FF"/>
<text x="471" y="165" font-size="12" fill="#000" letter-spacing="-0.6">20</text>
<rect x="466" y="156" width="2" height="1" fill="#0000FF"/>
<rect x="466" y="151" width="2" height="1" fill="#0000FF"/>
<rect x="466" y="146" width="2" height="1" fill="#0000FF"/>
<rect x="466" y="141" width="4" height="1" fill="#0000FF"/>
<text x="471" y="144" font-size="12" fill="#000" letter-spacing="-0.6">24</text>
<rect x="466" y="136" width="2" height="1" fill="#0000FF"/>
<rect x="466" y="131" width="2" height="1" fill="#0000FF"/>
<rect x="46" y="291" width="422" height="137" fill="#000"/>
<rect x="48" y="293" width="418" height="134" fill="url(#g2)"/>
<rect x="48" y="294" width="418" height="4" fill="#FFFFFF" fill-opacity="0.035"/>
<rect x="48" y="308" width="418" height="4" fill="#FFFFFF" fill-opacity="0.032"/>
<rect x="48" y="321" width="418" height="4" fill="#FFFFFF" fill-opacity="0.029"/>
<rect x="48" y="334" width="418" height="4" fill="#FFFFFF" fill-opacity="0.026"/>
<rect x="48" y="348" width="418" height="4" fill="#FFFFFF" fill-opacity="0.023"/>
<rect x="48" y="361" width="418" height="4" fill="#FFFFFF" fill-opacity="0.020"/>
<rect x="48" y="374" width="418" height="4" fill="#FFFFFF" fill-opacity="0.018"/>
<rect x="48" y="388" width="418" height="4" fill="#FFFFFF" fill-opacity="0.015"/>
<rect x="48" y="401" width="418" height="4" fill="#FFFFFF" fill-opacity="0.012"/>
<rect x="48" y="414" width="418" height="4" fill="#FFFFFF" fill-opacity="0.009"/>
<rect x="48" y="307" width="418" height="1" fill="#000090"/>
<rect x="48" y="333" width="418" height="1" fill="#000090"/>
<rect x="48" y="360" width="418" height="1" fill="#000090"/>
<rect x="48" y="387" width="418" height="1" fill="#000090"/>
<rect x="48" y="413" width="418" height="1" fill="#000090"/>
<rect x="57" y="293" width="1" height="134" fill="#000090"/>
<rect x="66" y="293" width="1" height="134" fill="#000090"/>
<rect x="75" y="293" width="1" height="134" fill="#000090"/>
<rect x="85" y="293" width="1" height="134" fill="#000090"/>
<rect x="103" y="293" width="1" height="134" fill="#000090"/>
<rect x="113" y="293" width="1" height="134" fill="#000090"/>
<rect x="122" y="293" width="1" height="134" fill="#000090"/>
<rect x="131" y="293" width="1" height="134" fill="#000090"/>
<rect x="150" y="293" width="1" height="134" fill="#000090"/>
<rect x="159" y="293" width="1" height="134" fill="#000090"/>
<rect x="168" y="293" width="1" height="134" fill="#000090"/>
<rect x="178" y="293" width="1" height="134" fill="#000090"/>
<rect x="196" y="293" width="1" height="134" fill="#000090"/>
<rect x="205" y="293" width="1" height="134" fill="#000090"/>
<rect x="215" y="293" width="1" height="134" fill="#000090"/>
<rect x="224" y="293" width="1" height="134" fill="#000090"/>
<rect x="243" y="293" width="1" height="134" fill="#000090"/>
<rect x="252" y="293" width="1" height="134" fill="#000090"/>
<rect x="261" y="293" width="1" height="134" fill="#000090"/>
<rect x="270" y="293" width="1" height="134" fill="#000090"/>
<rect x="289" y="293" width="1" height="134" fill="#000090"/>
<rect x="298" y="293" width="1" height="134" fill="#000090"/>
<rect x="308" y="293" width="1" height="134" fill="#000090"/>
<rect x="317" y="293" width="1" height="134" fill="#000090"/>
<rect x="335" y="293" width="1" height="134" fill="#000090"/>
<rect x="345" y="293" width="1" height="134" fill="#000090"/>
<rect x="354" y="293" width="1" height="134" fill="#000090"/>
<rect x="363" y="293" width="1" height="134" fill="#000090"/>
<rect x="382" y="293" width="1" height="134" fill="#000090"/>
<rect x="391" y="293" width="1" height="134" fill="#000090"/>
<rect x="400" y="293" width="1" height="134" fill="#000090"/>
<rect x="410" y="293" width="1" height="134" fill="#000090"/>
<rect x="428" y="293" width="1" height="134" fill="#000090"/>
<rect x="438" y="293" width="1" height="134" fill="#000090"/>
<rect x="447" y="293" width="1" height="134" fill="#000090"/>
<rect x="456" y="293" width="1" height="134" fill="#000090"/>
<rect x="48" y="293" width="418" height="1" fill="#0000FF"/>
<rect x="48" y="320" width="418" height="1" fill="#0000FF"/>
<rect x="48" y="347" width="418" height="1" fill="#0000FF"/>
<rect x="48" y="373" width="418" height="1" fill="#0000FF"/>
<rect x="48" y="400" width="418" height="1" fill="#0000FF"/>
<rect x="48" y="426" width="418" height="1" fill="#0000FF"/>
<rect x="94" y="293" width="1" height="134" fill="#0000FF"/>
<rect x="140" y="293" width="1" height="134" fill="#0000FF"/>
<rect x="187" y="293" width="1" height="134" fill="#0000FF"/>
<rect x="233" y="293" width="1" height="134" fill="#0000FF"/>
<rect x="280" y="293" width="1" height="134" fill="#0000FF"/>
<rect x="326" y="293" width="1" height="134" fill="#0000FF"/>
<rect x="373" y="293" width="1" height="134" fill="#0000FF"/>
<rect x="419" y="293" width="1" height="134" fill="#0000FF"/>
<rect x="57" y="427" width="1" height="1" fill="#0000C0"/>
<rect x="66" y="427" width="1" height="1" fill="#0000C0"/>
<rect x="75" y="427" width="1" height="1" fill="#0000C0"/>
<rect x="85" y="427" width="1" height="1" fill="#0000C0"/>
<rect x="94" y="427" width="1" height="1" fill="#0000C0"/>
<rect x="103" y="427" width="1" height="1" fill="#0000C0"/>
<rect x="113" y="427" width="1" height="1" fill="#0000C0"/>
<rect x="122" y="427" width="1" height="1" fill="#0000C0"/>
<rect x="131" y="427" width="1" height="1" fill="#0000C0"/>
<rect x="140" y="427" width="1" height="1" fill="#0000C0"/>
<rect x="150" y="427" width="1" height="1" fill="#0000C0"/>
<rect x="159" y="427" width="1" height="1" fill="#0000C0"/>
<rect x="168" y="427" width="1" height="1" fill="#0000C0"/>
<rect x="178" y="427" width="1" height="1" fill="#0000C0"/>
<rect x="187" y="427" width="1" height="1" fill="#0000C0"/>
<rect x="196" y="427" width="1" height="1" fill="#0000C0"/>
<rect x="205" y="427" width="1" height="1" fill="#0000C0"/>
<rect x="215" y="427" width="1" height="1" fill="#0000C0"/>
<rect x="224" y="427" width="1" height="1" fill="#0000C0"/>
<rect x="233" y="427" width="1" height="1" fill="#0000C0"/>
<rect x="243" y="427" width="1" height="1" fill="#0000C0"/>
<rect x="252" y="427" width="1" height="1" fill="#0000C0"/>
<rect x="261" y="427" width="1" height="1" fill="#0000C0"/>
<rect x="270" y="427" width="1" height="1" fill="#0000C0"/>
<rect x="280" y="427" width="1" height="1" fill="#0000C0"/>
<rect x="289" y="427" width="1" height="1" fill="#0000C0"/>
<rect x="298" y="427" width="1" height="1" fill="#0000C0"/>
<rect x="308" y="427" width="1" height="1" fill="#0000C0"/>
<rect x="317" y="427" width="1" height="1" fill="#0000C0"/>
<rect x="326" y="427" width="1" height="1" fill="#0000C0"/>
<rect x="335" y="427" width="1" height="1" fill="#0000C0"/>
<rect x="345" y="427" width="1" height="1" fill="#0000C0"/>
<rect x="354" y="427" width="1" height="1" fill="#0000C0"/>
<rect x="363" y="427" width="1" height="1" fill="#0000C0"/>
<rect x="373" y="427" width="1" height="1" fill="#0000C0"/>
<rect x="382" y="427" width="1" height="1" fill="#0000C0"/>
<rect x="391" y="427" width="1" height="1" fill="#0000C0"/>
<rect x="400" y="427" width="1" height="1" fill="#0000C0"/>
<rect x="410" y="427" width="1" height="1" fill="#0000C0"/>
<rect x="419" y="427" width="1" height="1" fill="#0000C0"/>
<rect x="428" y="427" width="1" height="1" fill="#0000C0"/>
<rect x="438" y="427" width="1" height="1" fill="#0000C0"/>
<rect x="447" y="427" width="1" height="1" fill="#0000C0"/>
<rect x="456" y="427" width="1" height="1" fill="#0000C0"/>
<rect x="46" y="293" width="2" height="1" fill="#0000C0"/>
<rect x="46" y="307" width="2" height="1" fill="#0000C0"/>
<rect x="46" y="320" width="2" height="1" fill="#0000C0"/>
<rect x="46" y="333" width="2" height="1" fill="#0000C0"/>
<rect x="46" y="347" width="2" height="1" fill="#0000C0"/>
<rect x="46" y="360" width="2" height="1" fill="#0000C0"/>
<rect x="46" y="373" width="2" height="1" fill="#0000C0"/>
<rect x="46" y="387" width="2" height="1" fill="#0000C0"/>
<rect x="46" y="400" width="2" height="1" fill="#0000C0"/>
<rect x="46" y="413" width="2" height="1" fill="#0000C0"/>
<rect x="46" y="426" width="2" height="1" fill="#0000C0"/>
<path d="M48 370.4 L49 367.9 L50 366.6 L51 368.2 L52 368.2 L53 368.0 L54 370.1 L55 367.0 L56 369.9 L57 366.6 L58 367.2 L59 369.0 L60 369.6 L61 369.2 L62 368.5 L63 368.2 L64 368.2 L65 368.7 L66 367.4 L67 367.7 L68 367.7 L69 366.7 L70 367.3 L71 366.7 L72 368.3 L73 365.8 L74 364.4 L75 364.2 L76 364.3 L77 365.2 L78 363.6 L79 364.6 L80 366.5 L81 360.8 L82 362.7 L83 364.5 L84 364.8 L85 364.6 L86 363.8 L87 365.2 L88 364.8 L89 363.7 L90 367.6 L91 365.0 L92 363.8 L93 364.4 L94 364.3 L95 364.5 L96 361.1 L97 364.1 L98 366.0 L99 363.2 L100 364.7 L101 366.1 L102 366.0 L103 366.8 L104 362.7 L105 364.5 L106 364.6 L107 365.9 L108 366.5 L109 361.6 L110 366.6 L111 363.3 L112 366.1 L113 363.3 L114 365.5 L115 366.9 L116 365.2 L117 365.6 L118 366.5 L119 365.6 L120 365.4 L121 367.5 L122 366.8 L123 365.1 L124 369.0 L125 363.9 L126 366.6 L127 365.0 L128 365.5 L129 366.3 L130 365.6 L131 366.1 L132 363.3 L133 363.3 L134 366.1 L135 364.0 L136 363.9 L137 363.3 L138 366.8 L139 366.2 L140 367.1 L141 363.9 L142 365.1 L143 363.6 L144 366.1 L145 367.1 L146 363.9 L147 367.1 L148 366.3 L149 364.8 L150 362.4 L151 366.7 L152 364.7 L153 363.9 L154 365.1 L155 365.0 L156 366.3 L157 363.0 L158 365.7 L159 366.0 L160 365.9 L161 363.7 L162 362.8 L163 365.0 L164 363.7 L165 363.7 L166 365.3 L167 363.0 L168 360.2 L169 362.6 L170 360.6 L171 364.0 L172 363.2 L173 361.9 L174 362.6 L175 363.6 L176 362.6 L177 364.2 L178 362.3 L179 363.7 L180 364.3 L181 364.4 L182 361.4 L183 363.4 L184 359.8 L185 360.7 L186 359.6 L187 363.5 L188 360.5 L189 362.0 L190 361.7 L191 361.9 L192 361.1 L193 362.2 L194 364.2 L195 361.9 L196 362.5 L197 363.0 L198 361.4 L199 360.0 L200 360.9 L201 363.0 L202 359.4 L203 360.8 L204 362.8 L205 362.5 L206 361.4 L207 362.3 L208 361.4 L209 359.6 L210 359.0 L211 360.1 L212 362.1 L213 360.1 L214 359.6 L215 359.7 L216 358.6 L217 360.3 L218 358.9 L219 360.8 L220 357.2 L221 360.6 L222 359.3 L223 357.5 L224 360.9 L225 359.5 L226 356.9 L227 358.6 L228 360.0 L229 359.0 L230 360.5 L231 360.4 L232 360.3 L233 359.8 L234 361.1 L235 360.2 L236 359.9 L237 356.5 L238 360.4 L239 360.9 L240 358.7 L241 358.5 L242 361.6 L243 356.7 L244 359.6 L245 362.1 L246 357.7 L247 359.8 L248 361.3 L249 358.6 L250 359.5 L251 359.9 L252 357.5 L253 358.5 L254 359.0 L255 359.6 L256 358.5 L257 358.2 L258 357.1 L259 357.9 L260 359.5 L261 358.5 L262 357.2 L263 357.2 L264 361.7 L265 359.7 L266 359.0 L267 354.7 L268 358.9 L269 358.7 L270 360.2 L271 358.5 L272 357.8 L273 358.5 L274 355.2 L275 359.0 L276 358.0 L277 356.6 L278 359.2 L279 359.8 L280 355.6 L281 356.4 L282 357.6 L283 357.4 L284 356.6 L285 355.8 L286 359.8 L287 358.3 L288 355.3 L289 355.1 L290 359.0 L291 358.0 L292 359.0 L293 357.6 L294 355.4 L295 356.8 L296 353.6 L297 355.3 L298 356.2 L299 356.9 L300 355.2 L301 355.9 L302 356.6 L303 356.4 L304 356.7 L305 356.1 L306 355.3 L307 356.7 L308 355.7 L309 354.5 L310 354.7 L311 355.5 L312 355.3 L313 355.6 L314 355.3 L315 355.5 L316 355.1 L317 353.6 L318 355.7 L319 356.5 L320 355.7 L321 354.8 L322 355.6 L323 353.8 L324 352.5 L325 355.0 L326 353.7 L327 355.8 L328 353.4 L329 351.4 L330 353.4 L331 356.8 L332 354.2 L333 352.9 L334 353.6 L335 355.2 L336 355.2 L337 354.7 L338 356.4 L339 355.3 L340 354.3 L341 355.1 L342 356.5 L343 355.5 L344 355.6 L345 352.8 L346 354.0 L347 355.1 L348 353.7 L349 355.4 L350 354.8 L351 355.1 L352 353.5 L353 357.0 L354 355.2 L355 353.2 L356 353.5 L357 356.7 L358 352.8 L359 354.2 L360 354.3 L361 352.9 L362 351.3 L363 352.9 L364 353.1 L365 354.0 L366 353.4 L367 352.3 L368 353.3 L369 352.8 L370 352.3 L371 352.0 L372 351.5 L373 352.6 L374 350.3 L375 350.8 L376 351.5 L377 349.5 L378 350.8 L379 348.6 L380 350.3 L381 351.8 L382 351.7 L383 350.8 L384 350.5 L385 348.9 L386 353.0 L387 351.3 L388 351.9 L389 349.3 L390 350.1 L391 347.9 L392 351.2 L393 351.3 L394 347.5 L395 349.8 L396 350.7 L397 347.5 L398 347.3 L399 348.2 L400 348.7 L401 347.6 L402 349.3 L403 349.4 L404 349.8 L405 349.8 L406 350.7 L407 350.1 L408 346.8 L409 347.7 L410 346.9 L411 346.7 L412 347.9 L413 347.9 L414 348.4 L415 345.6 L416 345.9 L417 347.3 L418 347.0 L419 346.7 L420 346.9 L421 346.0 L422 347.9 L423 347.5 L424 346.9 L425 346.1 L426 346.8 L427 343.5 L428 345.7 L429 347.0 L430 345.0 L431 347.3 L432 347.2 L433 345.2 L434 346.7 L435 346.6 L436 347.6 L437 347.8 L438 347.0 L439 345.9 L440 346.8 L441 347.0 L442 348.0 L443 347.5 L444 346.2 L445 345.4 L446 346.7 L447 346.3 L448 345.9 L449 347.2 L450 346.7 L451 347.6 L452 348.1 L453 347.0" stroke="#FF00FF" stroke-width="1.5" fill="none" shape-rendering="auto"/>
<rect x="454" y="293" width="1" height="133" fill="#E0E0E0"/>
<rect x="53" y="373" width="1" height="53" fill="#00F000"/>
<rect x="113" y="413" width="1" height="13" fill="#00F000"/>
<rect x="148" y="413" width="1" height="13" fill="#00F000"/>
<rect x="204" y="386" width="1" height="40" fill="#00F000"/>
<rect x="205" y="413" width="1" height="13" fill="#00F000"/>
<rect x="243" y="386" width="3" height="40" fill="#00F000"/>
<rect x="264" y="399" width="1" height="27" fill="#00F000"/>
<rect x="304" y="413" width="1" height="13" fill="#00F000"/>
<rect x="315" y="413" width="1" height="13" fill="#00F000"/>
<rect x="320" y="399" width="1" height="27" fill="#00F000"/>
<rect x="345" y="386" width="2" height="40" fill="#00F000"/>
<rect x="347" y="399" width="1" height="27" fill="#00F000"/>
<rect x="343" y="413" width="1" height="13" fill="#00F000"/>
<rect x="358" y="399" width="1" height="27" fill="#00F000"/>
<rect x="372" y="399" width="1" height="27" fill="#00F000"/>
<rect x="374" y="413" width="1" height="13" fill="#00F000"/>
<rect x="379" y="399" width="1" height="27" fill="#00F000"/>
<rect x="385" y="413" width="1" height="13" fill="#00F000"/>
<rect x="408" y="399" width="1" height="27" fill="#00F000"/>
<rect x="413" y="413" width="1" height="13" fill="#00F000"/>
<rect x="421" y="413" width="1" height="13" fill="#00F000"/>
<rect x="428" y="413" width="1" height="13" fill="#00F000"/>
<rect x="434" y="413" width="1" height="13" fill="#00F000"/>
<rect x="442" y="413" width="2" height="13" fill="#00F000"/>
<rect x="449" y="399" width="1" height="27" fill="#00F000"/>
<rect x="450" y="413" width="3" height="13" fill="#00F000"/>
<rect x="45" y="293" width="3" height="1" fill="#0000FF"/>
<text x="43" y="296" font-size="12" fill="#000" text-anchor="end" letter-spacing="-0.6">10</text>
<rect x="45" y="320" width="3" height="1" fill="#0000FF"/>
<text x="43" y="323" font-size="12" fill="#000" text-anchor="end" letter-spacing="-0.6">8</text>
<rect x="45" y="346" width="3" height="1" fill="#0000FF"/>
<text x="43" y="349" font-size="12" fill="#000" text-anchor="end" letter-spacing="-0.6">6</text>
<rect x="45" y="373" width="3" height="1" fill="#0000FF"/>
<text x="43" y="376" font-size="12" fill="#000" text-anchor="end" letter-spacing="-0.6">4</text>
<rect x="45" y="399" width="3" height="1" fill="#0000FF"/>
<text x="43" y="402" font-size="12" fill="#000" text-anchor="end" letter-spacing="-0.6">2</text>
<text x="50.0" y="440" font-size="12" fill="#000" text-anchor="middle" letter-spacing="-0.6">0.0</text>
<text x="96.4" y="440" font-size="12" fill="#000" text-anchor="middle" letter-spacing="-0.6">0.5</text>
<text x="142.9" y="440" font-size="12" fill="#000" text-anchor="middle" letter-spacing="-0.6">1.0</text>
<text x="189.3" y="440" font-size="12" fill="#000" text-anchor="middle" letter-spacing="-0.6">1.5</text>
<text x="235.8" y="440" font-size="12" fill="#000" text-anchor="middle" letter-spacing="-0.6">2.0</text>
<text x="282.2" y="440" font-size="12" fill="#000" text-anchor="middle" letter-spacing="-0.6">2.5</text>
<text x="328.6" y="440" font-size="12" fill="#000" text-anchor="middle" letter-spacing="-0.6">3.0</text>
<text x="375.1" y="440" font-size="12" fill="#000" text-anchor="middle" letter-spacing="-0.6">3.5</text>
<text x="421.5" y="440" font-size="12" fill="#000" text-anchor="middle" letter-spacing="-0.6">4.0</text>
<text x="468.0" y="440" font-size="12" fill="#000" text-anchor="middle" letter-spacing="-0.6">4.5</text>
<text x="471" y="402" font-size="12" fill="#000" letter-spacing="-0.6">4</text>
<text x="471" y="376" font-size="12" fill="#000" letter-spacing="-0.6">8</text>
<text x="471" y="349" font-size="12" fill="#000" letter-spacing="-0.6">12</text>
<text x="471" y="323" font-size="12" fill="#000" letter-spacing="-0.6">16</text>
<text x="471" y="296" font-size="12" fill="#000" letter-spacing="-0.6">20</text>
<rect x="491" y="124" width="139" height="1" fill="#808080"/>
<rect x="491" y="124" width="1" height="84" fill="#808080"/>
<rect x="491" y="207" width="139" height="1" fill="#808080"/>
<rect x="629" y="124" width="1" height="84" fill="#808080"/>
<rect x="492" y="125" width="137" height="1" fill="#FFFFFF"/>
<rect x="492" y="125" width="1" height="82" fill="#FFFFFF"/>
<rect x="491" y="208" width="140" height="1" fill="#FFFFFF"/>
<rect x="630" y="124" width="1" height="85" fill="#FFFFFF"/>
<rect x="498" y="120" width="45" height="8" fill="#D6D3CE"/>
<text transform="translate(501 130) scale(0.87 1)" x="0" y="0" font-size="12" fill="#000">Disc info</text>
<text transform="translate(500 144) scale(0.87 1)" x="0" y="0" font-size="12" fill="#000">Type:</text>
<text transform="translate(546 144) scale(0.87 1)" x="0" y="0" font-size="12" fill="#0000A0">DVD-R</text>
<text transform="translate(500 161) scale(0.87 1)" x="0" y="0" font-size="12" fill="#000">ID:</text>
<text transform="translate(546 161) scale(0.87 1)" x="0" y="0" font-size="12" fill="#0000A0">MCC 03RG20</text>
<text transform="translate(500 179) scale(0.87 1)" x="0" y="0" font-size="12" fill="#000">Date:</text>
<text transform="translate(546 179) scale(0.87 1)" x="0" y="0" font-size="12" fill="#0000A0">n/a</text>
<text transform="translate(500 197) scale(0.87 1)" x="0" y="0" font-size="12" fill="#000">Label:</text>
<text transform="translate(546 197) scale(0.87 1)" x="0" y="0" font-size="12" fill="#0000A0">n/a</text>
<rect x="491" y="215" width="139" height="1" fill="#808080"/>
<rect x="491" y="215" width="1" height="204" fill="#808080"/>
<rect x="491" y="418" width="139" height="1" fill="#808080"/>
<rect x="629" y="215" width="1" height="204" fill="#808080"/>
<rect x="492" y="216" width="137" height="1" fill="#FFFFFF"/>
<rect x="492" y="216" width="1" height="202" fill="#FFFFFF"/>
<rect x="491" y="419" width="140" height="1" fill="#FFFFFF"/>
<rect x="630" y="215" width="1" height="205" fill="#FFFFFF"/>
<rect x="498" y="211" width="43" height="8" fill="#D6D3CE"/>
<text transform="translate(501 221) scale(0.87 1)" x="0" y="0" font-size="12" fill="#000">Settings</text>
<rect x="500" y="225" width="84" height="21" fill="#FFFFFF"/>
<rect x="500" y="225" width="84" height="1" fill="#808080"/>
<rect x="500" y="225" width="1" height="21" fill="#808080"/>
<rect x="500" y="245" width="84" height="1" fill="#FFFFFF"/>
<rect x="583" y="225" width="1" height="21" fill="#FFFFFF"/>
<rect x="501" y="226" width="82" height="1" fill="#404040"/>
<rect x="501" y="226" width="1" height="19" fill="#404040"/>
<rect x="501" y="244" width="82" height="1" fill="#D6D3CE"/>
<rect x="582" y="226" width="1" height="19" fill="#D6D3CE"/>
<text transform="translate(505 240) scale(0.92 1)" x="0" y="0" font-size="12" fill="#000">8 X</text>
<rect x="566" y="227" width="16" height="17" fill="#D6D3CE"/>
<rect x="566" y="227" width="16" height="1" fill="#FFFFFF"/>
<rect x="566" y="227" width="1" height="17" fill="#FFFFFF"/>
<rect x="566" y="243" width="16" height="1" fill="#404040"/>
<rect x="581" y="227" width="1" height="17" fill="#404040"/>
<rect x="567" y="242" width="14" height="1" fill="#808080"/>
<rect x="580" y="228" width="1" height="15" fill="#808080"/>
<path d="M570 233 h7 l-3.5 4 z" fill="#000"/>
<rect x="592" y="224" width="23" height="23" fill="#D6D3CE"/>
<rect x="592" y="224" width="23" height="1" fill="#FFFFFF"/>
<rect x="592" y="224" width="1" height="23" fill="#FFFFFF"/>
<rect x="592" y="246" width="23" height="1" fill="#808080"/>
<rect x="614" y="224" width="1" height="23" fill="#808080"/>
<rect x="593" y="245" width="21" height="1" fill="#808080"/>
<rect x="613" y="225" width="1" height="21" fill="#808080"/>
<rect x="596" y="227" width="15" height="16" fill="#000"/>
<rect x="597" y="228" width="13" height="14" fill="#FFF"/>
<g shape-rendering="auto"><path d="M600.5 237 V233 H603.5 M607.5 234 V238.5 H604" stroke="#008000" stroke-width="1.4" fill="none"/><path d="M603 229.8 L606.6 233 L603 236.2 Z M604.5 235.3 L600.9 238.5 L604.5 241.7 Z" fill="#008000"/></g>
<text transform="translate(502 267) scale(0.87 1)" x="0" y="0" font-size="12" fill="#000">Start:</text>
<rect x="554" y="251" width="60" height="20" fill="#FFFFFF"/>
<rect x="554" y="251" width="60" height="1" fill="#808080"/>
<rect x="554" y="251" width="1" height="20" fill="#808080"/>
<rect x="554" y="270" width="60" height="1" fill="#FFFFFF"/>
<rect x="613" y="251" width="1" height="20" fill="#FFFFFF"/>
<rect x="555" y="252" width="58" height="1" fill="#404040"/>
<rect x="555" y="252" width="1" height="18" fill="#404040"/>
<rect x="555" y="269" width="58" height="1" fill="#D6D3CE"/>
<rect x="612" y="252" width="1" height="18" fill="#D6D3CE"/>
<text transform="translate(558 266) scale(0.92 1)" x="0" y="0" font-size="12" fill="#000">0000 MB</text>
<text transform="translate(502 289) scale(0.87 1)" x="0" y="0" font-size="12" fill="#000">End:</text>
<rect x="554" y="274" width="60" height="20" fill="#FFFFFF"/>
<rect x="554" y="274" width="60" height="1" fill="#808080"/>
<rect x="554" y="274" width="1" height="20" fill="#808080"/>
<rect x="554" y="293" width="60" height="1" fill="#FFFFFF"/>
<rect x="613" y="274" width="1" height="20" fill="#FFFFFF"/>
<rect x="555" y="275" width="58" height="1" fill="#404040"/>
<rect x="555" y="275" width="1" height="18" fill="#404040"/>
<rect x="555" y="292" width="58" height="1" fill="#D6D3CE"/>
<rect x="612" y="275" width="1" height="18" fill="#D6D3CE"/>
<text transform="translate(558 289) scale(0.92 1)" x="0" y="0" font-size="12" fill="#000">4480 MB</text>
<rect x="502" y="297" width="13" height="13" fill="#FFFFFF"/>
<rect x="502" y="297" width="13" height="1" fill="#808080"/>
<rect x="502" y="297" width="1" height="13" fill="#808080"/>
<rect x="502" y="309" width="13" height="1" fill="#FFFFFF"/>
<rect x="514" y="297" width="1" height="13" fill="#FFFFFF"/>
<rect x="503" y="298" width="11" height="1" fill="#404040"/>
<rect x="503" y="298" width="1" height="11" fill="#404040"/>
<rect x="503" y="308" width="11" height="1" fill="#D6D3CE"/>
<rect x="513" y="298" width="1" height="11" fill="#D6D3CE"/>
<text transform="translate(520 307) scale(0.87 1)" x="0" y="0" font-size="12" fill="#000">Quick scan</text>
<rect x="502" y="314" width="13" height="13" fill="#FFFFFF"/>
<rect x="502" y="314" width="13" height="1" fill="#808080"/>
<rect x="502" y="314" width="1" height="13" fill="#808080"/>
<rect x="502" y="326" width="13" height="1" fill="#FFFFFF"/>
<rect x="514" y="314" width="1" height="13" fill="#FFFFFF"/>
<rect x="503" y="315" width="11" height="1" fill="#404040"/>
<rect x="503" y="315" width="1" height="11" fill="#404040"/>
<rect x="503" y="325" width="11" height="1" fill="#D6D3CE"/>
<rect x="513" y="315" width="1" height="11" fill="#D6D3CE"/>
<path d="M505 320 l2 2 l4 -4 v2 l-4 4 l-2 -2 z" fill="#000" stroke="#000" stroke-width="0.8"/>
<text transform="translate(520 324) scale(0.87 1)" x="0" y="0" font-size="12" fill="#000">Show C1/PIE</text>
<rect x="502" y="330" width="13" height="13" fill="#FFFFFF"/>
<rect x="502" y="330" width="13" height="1" fill="#808080"/>
<rect x="502" y="330" width="1" height="13" fill="#808080"/>
<rect x="502" y="342" width="13" height="1" fill="#FFFFFF"/>
<rect x="514" y="330" width="1" height="13" fill="#FFFFFF"/>
<rect x="503" y="331" width="11" height="1" fill="#404040"/>
<rect x="503" y="331" width="1" height="11" fill="#404040"/>
<rect x="503" y="341" width="11" height="1" fill="#D6D3CE"/>
<rect x="513" y="331" width="1" height="11" fill="#D6D3CE"/>
<path d="M505 336 l2 2 l4 -4 v2 l-4 4 l-2 -2 z" fill="#000" stroke="#000" stroke-width="0.8"/>
<text transform="translate(520 340) scale(0.87 1)" x="0" y="0" font-size="12" fill="#000">Show C2/PIF</text>
<rect x="502" y="346" width="13" height="13" fill="#FFFFFF"/>
<rect x="502" y="346" width="13" height="1" fill="#808080"/>
<rect x="502" y="346" width="1" height="13" fill="#808080"/>
<rect x="502" y="358" width="13" height="1" fill="#FFFFFF"/>
<rect x="514" y="346" width="1" height="13" fill="#FFFFFF"/>
<rect x="503" y="347" width="11" height="1" fill="#404040"/>
<rect x="503" y="347" width="1" height="11" fill="#404040"/>
<rect x="503" y="357" width="11" height="1" fill="#D6D3CE"/>
<rect x="513" y="347" width="1" height="11" fill="#D6D3CE"/>
<path d="M505 352 l2 2 l4 -4 v2 l-4 4 l-2 -2 z" fill="#000" stroke="#000" stroke-width="0.8"/>
<text transform="translate(520 356) scale(0.87 1)" x="0" y="0" font-size="12" fill="#000">Show jitter</text>
<rect x="502" y="362" width="13" height="13" fill="#FFFFFF"/>
<rect x="502" y="362" width="13" height="1" fill="#808080"/>
<rect x="502" y="362" width="1" height="13" fill="#808080"/>
<rect x="502" y="374" width="13" height="1" fill="#FFFFFF"/>
<rect x="514" y="362" width="1" height="13" fill="#FFFFFF"/>
<rect x="503" y="363" width="11" height="1" fill="#404040"/>
<rect x="503" y="363" width="1" height="11" fill="#404040"/>
<rect x="503" y="373" width="11" height="1" fill="#D6D3CE"/>
<rect x="513" y="363" width="1" height="11" fill="#D6D3CE"/>
<path d="M505 368 l2 2 l4 -4 v2 l-4 4 l-2 -2 z" fill="#000" stroke="#000" stroke-width="0.8"/>
<text transform="translate(520 372) scale(0.87 1)" x="0" y="0" font-size="12" fill="#000">Show read speed</text>
<rect x="502" y="377" width="13" height="13" fill="#D6D3CE"/>
<rect x="502" y="377" width="13" height="1" fill="#808080"/>
<rect x="502" y="377" width="1" height="13" fill="#808080"/>
<rect x="502" y="389" width="13" height="1" fill="#FFFFFF"/>
<rect x="514" y="377" width="1" height="13" fill="#FFFFFF"/>
<rect x="503" y="378" width="11" height="1" fill="#404040"/>
<rect x="503" y="378" width="1" height="11" fill="#404040"/>
<rect x="503" y="388" width="11" height="1" fill="#D6D3CE"/>
<rect x="513" y="378" width="1" height="11" fill="#D6D3CE"/>
<path d="M505 383 l2 2 l4 -4 v2 l-4 4 l-2 -2 z" fill="#808080" stroke="#808080" stroke-width="0.8"/>
<text transform="translate(521 388) scale(0.87 1)" x="0" y="0" font-size="12" fill="#FFFFFF">Show write speed</text>
<text transform="translate(520 387) scale(0.87 1)" x="0" y="0" font-size="12" fill="#808080">Show write speed</text>
<rect x="527" y="393" width="98" height="23" fill="#D6D3CE"/>
<rect x="527" y="393" width="98" height="1" fill="#FFFFFF"/>
<rect x="527" y="393" width="1" height="23" fill="#FFFFFF"/>
<rect x="527" y="415" width="98" height="1" fill="#404040"/>
<rect x="624" y="393" width="1" height="23" fill="#404040"/>
<rect x="528" y="414" width="96" height="1" fill="#808080"/>
<rect x="623" y="394" width="1" height="21" fill="#808080"/>
<text transform="translate(576 409) scale(0.87 1)" x="0" y="0" font-size="12" fill="#000" text-anchor="middle">Advanced</text>
<rect x="491" y="425" width="139" height="1" fill="#808080"/>
<rect x="491" y="425" width="1" height="26" fill="#808080"/>
<rect x="491" y="450" width="139" height="1" fill="#808080"/>
<rect x="629" y="425" width="1" height="26" fill="#808080"/>
<rect x="492" y="426" width="137" height="1" fill="#FFFFFF"/>
<rect x="492" y="426" width="1" height="24" fill="#FFFFFF"/>
<rect x="491" y="451" width="140" height="1" fill="#FFFFFF"/>
<rect x="630" y="425" width="1" height="27" fill="#FFFFFF"/>
<text transform="translate(502 443) scale(0.87 1)" x="0" y="0" font-size="12" fill="#000">Quality score:</text>
<text transform="translate(621 443) scale(0.92 1)" x="0" y="0" font-size="12" fill="#0000A0" text-anchor="end">98</text>
<rect x="491" y="457" width="139" height="1" fill="#808080"/>
<rect x="491" y="457" width="1" height="56" fill="#808080"/>
<rect x="491" y="512" width="139" height="1" fill="#808080"/>
<rect x="629" y="457" width="1" height="56" fill="#808080"/>
<rect x="492" y="458" width="137" height="1" fill="#FFFFFF"/>
<rect x="492" y="458" width="1" height="54" fill="#FFFFFF"/>
<rect x="491" y="513" width="140" height="1" fill="#FFFFFF"/>
<rect x="630" y="457" width="1" height="57" fill="#FFFFFF"/>
<text transform="translate(502 477) scale(0.87 1)" x="0" y="0" font-size="12" fill="#000">Progress:</text>
<text transform="translate(621 477) scale(0.92 1)" x="0" y="0" font-size="12" fill="#0000A0" text-anchor="end">100 %</text>
<text transform="translate(502 493) scale(0.87 1)" x="0" y="0" font-size="12" fill="#000">Position:</text>
<text transform="translate(621 493) scale(0.92 1)" x="0" y="0" font-size="12" fill="#0000A0" text-anchor="end">4479 MB</text>
<text transform="translate(502 508) scale(0.87 1)" x="0" y="0" font-size="12" fill="#000">Speed:</text>
<text transform="translate(621 508) scale(0.92 1)" x="0" y="0" font-size="12" fill="#0000A0" text-anchor="end">8.34 X</text>
<rect x="14" y="457" width="146" height="1" fill="#808080"/>
<rect x="14" y="457" width="1" height="57" fill="#808080"/>
<rect x="14" y="513" width="146" height="1" fill="#808080"/>
<rect x="159" y="457" width="1" height="57" fill="#808080"/>
<rect x="15" y="458" width="144" height="1" fill="#FFFFFF"/>
<rect x="15" y="458" width="1" height="55" fill="#FFFFFF"/>
<rect x="14" y="514" width="147" height="1" fill="#FFFFFF"/>
<rect x="160" y="457" width="1" height="58" fill="#FFFFFF"/>
<rect x="24" y="452" width="53" height="10" fill="#D6D3CE"/>
<rect x="24" y="454" width="8" height="8" fill="#00FFFF"/>
<rect x="24" y="454" width="8" height="1" fill="#000"/>
<rect x="24" y="454" width="1" height="8" fill="#000"/>
<rect x="24" y="461" width="8" height="1" fill="#000"/>
<rect x="31" y="454" width="1" height="8" fill="#000"/>
<text transform="translate(36 462) scale(0.87 1)" x="0" y="0" font-size="12" fill="#000">PI Errors</text>
<text transform="translate(22 478) scale(0.87 1)" x="0" y="0" font-size="12" fill="#000">Average:</text>
<text transform="translate(151 478) scale(0.92 1)" x="0" y="0" font-size="12" fill="#0000A0" text-anchor="end">49.96</text>
<text transform="translate(22 493) scale(0.87 1)" x="0" y="0" font-size="12" fill="#000">Maximum:</text>
<text transform="translate(151 493) scale(0.92 1)" x="0" y="0" font-size="12" fill="#0000A0" text-anchor="end">189</text>
<text transform="translate(22 507) scale(0.87 1)" x="0" y="0" font-size="12" fill="#000">Total:</text>
<text transform="translate(151 507) scale(0.92 1)" x="0" y="0" font-size="12" fill="#0000A0" text-anchor="end">895165</text>
<rect x="172" y="457" width="146" height="1" fill="#808080"/>
<rect x="172" y="457" width="1" height="57" fill="#808080"/>
<rect x="172" y="513" width="146" height="1" fill="#808080"/>
<rect x="317" y="457" width="1" height="57" fill="#808080"/>
<rect x="173" y="458" width="144" height="1" fill="#FFFFFF"/>
<rect x="173" y="458" width="1" height="55" fill="#FFFFFF"/>
<rect x="172" y="514" width="147" height="1" fill="#FFFFFF"/>
<rect x="318" y="457" width="1" height="58" fill="#FFFFFF"/>
<rect x="182" y="452" width="62" height="10" fill="#D6D3CE"/>
<rect x="182" y="454" width="8" height="8" fill="#FFFF00"/>
<rect x="182" y="454" width="8" height="1" fill="#000"/>
<rect x="182" y="454" width="1" height="8" fill="#000"/>
<rect x="182" y="461" width="8" height="1" fill="#000"/>
<rect x="189" y="454" width="1" height="8" fill="#000"/>
<text transform="translate(194 462) scale(0.87 1)" x="0" y="0" font-size="12" fill="#000">PI Failures</text>
<text transform="translate(180 478) scale(0.87 1)" x="0" y="0" font-size="12" fill="#000">Average:</text>
<text transform="translate(310 478) scale(0.92 1)" x="0" y="0" font-size="12" fill="#0000A0" text-anchor="end">0.00</text>
<text transform="translate(180 493) scale(0.87 1)" x="0" y="0" font-size="12" fill="#000">Maximum:</text>
<text transform="translate(310 493) scale(0.92 1)" x="0" y="0" font-size="12" fill="#0000A0" text-anchor="end">4</text>
<text transform="translate(180 507) scale(0.87 1)" x="0" y="0" font-size="12" fill="#000">Total:</text>
<text transform="translate(310 507) scale(0.92 1)" x="0" y="0" font-size="12" fill="#0000A0" text-anchor="end">349</text>
<rect x="331" y="457" width="147" height="1" fill="#808080"/>
<rect x="331" y="457" width="1" height="42" fill="#808080"/>
<rect x="331" y="498" width="147" height="1" fill="#808080"/>
<rect x="477" y="457" width="1" height="42" fill="#808080"/>
<rect x="332" y="458" width="145" height="1" fill="#FFFFFF"/>
<rect x="332" y="458" width="1" height="40" fill="#FFFFFF"/>
<rect x="331" y="499" width="148" height="1" fill="#FFFFFF"/>
<rect x="478" y="457" width="1" height="43" fill="#FFFFFF"/>
<rect x="341" y="452" width="34" height="10" fill="#D6D3CE"/>
<rect x="341" y="454" width="8" height="8" fill="#FF00FF"/>
<rect x="341" y="454" width="8" height="1" fill="#000"/>
<rect x="341" y="454" width="1" height="8" fill="#000"/>
<rect x="341" y="461" width="8" height="1" fill="#000"/>
<rect x="348" y="454" width="1" height="8" fill="#000"/>
<text transform="translate(353 462) scale(0.87 1)" x="0" y="0" font-size="12" fill="#000">Jitter</text>
<text transform="translate(339 478) scale(0.87 1)" x="0" y="0" font-size="12" fill="#000">Average:</text>
<text transform="translate(469 478) scale(0.92 1)" x="0" y="0" font-size="12" fill="#0000A0" text-anchor="end">9.95 %</text>
<text transform="translate(339 493) scale(0.87 1)" x="0" y="0" font-size="12" fill="#000">Maximum:</text>
<text transform="translate(469 493) scale(0.92 1)" x="0" y="0" font-size="12" fill="#0000A0" text-anchor="end">12.3 %</text>
<text transform="translate(341 512) scale(0.87 1)" x="0" y="0" font-size="12" fill="#000">PO failures:</text>
<text transform="translate(469 512) scale(0.92 1)" x="0" y="0" font-size="12" fill="#0000A0" text-anchor="end">0</text>
</svg></body></html>
